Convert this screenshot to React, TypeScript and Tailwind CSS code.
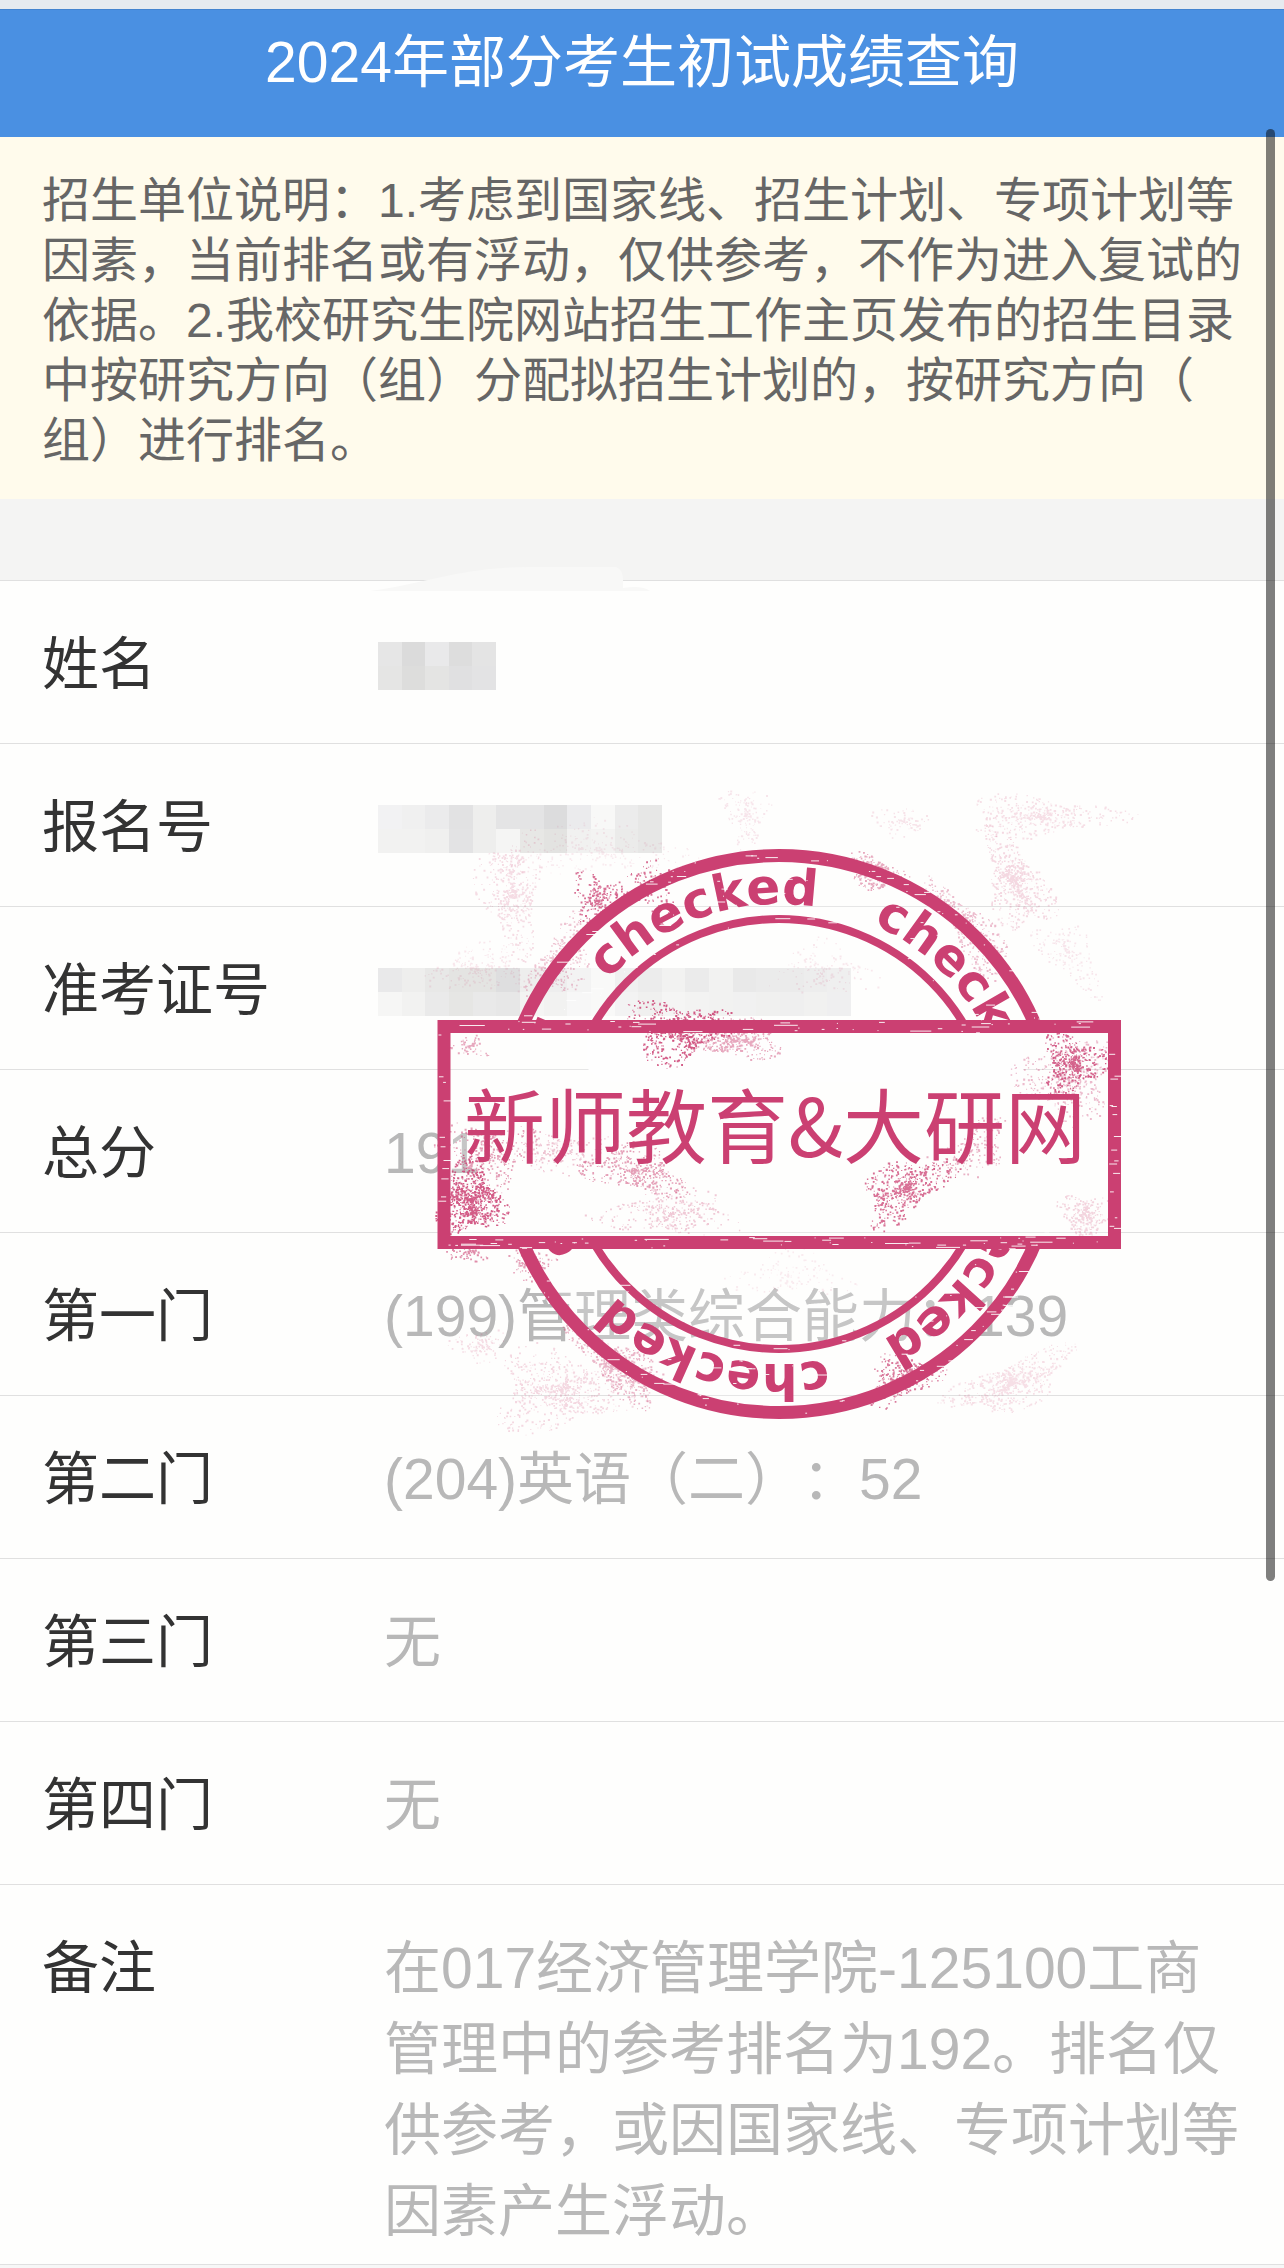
import React from 'react';

interface ScoreRow {
    label: string;
    value?: string;
    mosaic?: string[][];
}

interface Cluster {
    x: number;
    y: number;
    rx: number;
    ry: number;
    angle?: number;
    count: number;
    opacity: number;
}

const PINK = '#cb4072';

const rows: ScoreRow[] = [
    {
        label: '姓名',
        mosaic: [
            ['#e6e6e6', '#dbdbdb', '#e9e9ea', '#dddddd', '#e4e4e4'],
            ['#e5e5e4', '#dddddc', '#e4e4e3', '#e0e0e1', '#e3e3e4']
        ]
    },
    {
        label: '报名号',
        mosaic: [
            ['#f2f2f3', '#f0f0f0', '#ebebec', '#e2e2e3', '#eeeeed', '#e4e4e5', '#e4e4e5', '#dcdcdd', '#ebebed', '#f8f8f7', '#ececec', '#e7e7e6'],
            ['#f2f2f1', '#f2f2f1', '#f0f0ef', '#e3e3e4', '#eeeeed', '#f5f5f4', '#e7e7e5', '#e3e3e1', '#f1f1f0', '#f3f3f2', '#ebebea', '#e7e7e6']
        ]
    },
    {
        label: '准考证号',
        mosaic: [
            ['#e9e9ea', '#eeeeed', '#e8e8e7', '#e4e4e2', '#e4e4e2', '#dededf', '#eeeeed', '#eaeaea', '#f1f1f1', '#f8f8f7', '#ededed', '#e8e8e8', '#efefee', '#e6e6e6', '#efefee', '#e4e4e4', '#e7e7e7', '#e7e7e6', '#e9e9e9', '#ebebeb'],
            ['#f6f6f5', '#f2f2f1', '#eaeaea', '#e6e6e4', '#e9e9e9', '#e7e7e7', '#f3f3f2', '#efefee', '#f5f5f5', '#f8f8f7', '#f1f1f0', '#ededec', '#f3f3f2', '#f0f0ef', '#efefee', '#eeeeee', '#ededec', '#ececec', '#eeeeed', '#ececed']
        ]
    },
    { label: '总分', value: '191' },
    { label: '第一门', value: '(199)管理类综合能力：139' },
    { label: '第二门', value: '(204)英语（二）：52' },
    { label: '第三门', value: '无' },
    { label: '第四门', value: '无' }
];

const clusters: Cluster[] = [
    { x: 470, y: 1200, rx: 42, ry: 46, count: 800, opacity: 0.85 },
    { x: 485, y: 1155, rx: 62, ry: 50, count: 320, opacity: 0.5 },
    { x: 468, y: 1045, rx: 26, ry: 18, count: 60, opacity: 0.45 },
    { x: 676, y: 1030, rx: 66, ry: 40, count: 560, opacity: 0.85 },
    { x: 735, y: 1040, rx: 64, ry: 24, count: 420, opacity: 0.45 },
    { x: 1072, y: 1062, rx: 40, ry: 38, count: 430, opacity: 0.8 },
    { x: 1068, y: 1080, rx: 60, ry: 55, count: 420, opacity: 0.35 },
    { x: 905, y: 1188, rx: 64, ry: 34, angle: -30, count: 540, opacity: 0.75 },
    { x: 970, y: 1150, rx: 56, ry: 30, angle: -30, count: 190, opacity: 0.4 },
    { x: 635, y: 1170, rx: 68, ry: 30, angle: 12, count: 400, opacity: 0.5 },
    { x: 560, y: 1150, rx: 66, ry: 28, count: 180, opacity: 0.3 },
    { x: 670, y: 1212, rx: 90, ry: 32, count: 320, opacity: 0.28 },
    { x: 596, y: 900, rx: 32, ry: 36, count: 240, opacity: 0.75 },
    { x: 646, y: 886, rx: 40, ry: 34, count: 120, opacity: 0.75 },
    { x: 560, y: 960, rx: 30, ry: 58, angle: 30, count: 360, opacity: 0.3 },
    { x: 512, y: 890, rx: 40, ry: 76, count: 520, opacity: 0.18 },
    { x: 600, y: 850, rx: 110, ry: 34, count: 240, opacity: 0.1 },
    { x: 745, y: 815, rx: 30, ry: 38, count: 150, opacity: 0.13 },
    { x: 480, y: 970, rx: 66, ry: 30, count: 220, opacity: 0.12 },
    { x: 876, y: 872, rx: 38, ry: 20, angle: 20, count: 340, opacity: 0.45 },
    { x: 970, y: 930, rx: 76, ry: 24, angle: 52, count: 420, opacity: 0.35 },
    { x: 1040, y: 816, rx: 100, ry: 26, count: 420, opacity: 0.16 },
    { x: 1015, y: 880, rx: 72, ry: 36, angle: 65, count: 620, opacity: 0.2 },
    { x: 1070, y: 955, rx: 56, ry: 28, angle: 50, count: 160, opacity: 0.13 },
    { x: 900, y: 820, rx: 42, ry: 22, count: 90, opacity: 0.14 },
    { x: 820, y: 970, rx: 66, ry: 34, count: 140, opacity: 0.12 },
    { x: 1085, y: 1215, rx: 34, ry: 30, count: 260, opacity: 0.22 },
    { x: 468, y: 1252, rx: 26, ry: 14, count: 60, opacity: 0.6 },
    { x: 530, y: 1262, rx: 30, ry: 22, count: 120, opacity: 0.5 },
    { x: 618, y: 1366, rx: 72, ry: 28, angle: 38, count: 620, opacity: 0.38 },
    { x: 560, y: 1390, rx: 90, ry: 52, count: 700, opacity: 0.2 },
    { x: 480, y: 1345, rx: 34, ry: 22, count: 100, opacity: 0.18 },
    { x: 902, y: 1378, rx: 50, ry: 30, angle: -20, count: 320, opacity: 0.7 },
    { x: 1012, y: 1382, rx: 84, ry: 30, angle: -22, count: 640, opacity: 0.16 },
    { x: 790, y: 1275, rx: 76, ry: 28, count: 130, opacity: 0.1 }
];

// Seeded so the grain looks the same on every render
const createRandom = (seed: number) => {
    let state = seed;
    return () => {
        state = (state * 1664525 + 1013904223) % 4294967296;
        return state / 4294967296;
    };
};

const specklePath = (cluster: Cluster, seed: number) => {
    const random = createRandom(seed);
    const turn = ((cluster.angle ?? 0) * Math.PI) / 180;
    let d = '';
    for (let i = 0; i < cluster.count; i++) {
        const theta = random() * Math.PI * 2;
        const radius = Math.pow(random(), 0.8) * (0.75 + 0.25 * Math.sin(theta * 3 + seed));
        const dx = Math.cos(theta) * radius * cluster.rx;
        const dy = Math.sin(theta) * radius * cluster.ry;
        const x = cluster.x + dx * Math.cos(turn) - dy * Math.sin(turn);
        const y = cluster.y + dx * Math.sin(turn) + dy * Math.cos(turn);
        const size = 0.8 + random() * 1.3;
        d += `M${x.toFixed(1)} ${y.toFixed(1)}h${size.toFixed(1)}v${size.toFixed(1)}h-${size.toFixed(1)}z`;
    }
    return d;
};

const scratch = (x: number, y: number, length: number) => `M${x.toFixed(1)} ${y.toFixed(1)}h${length.toFixed(1)}`;

const scratchPath = () => {
    const random = createRandom(77);
    let d = '';
    for (let i = 0; i < 90; i++) {
        const edge = random() < 0.5 ? 1021 : 1237;
        d += scratch(445 + random() * 660, edge + random() * 11, 1 + Math.pow(random(), 4) * 26);
    }
    for (let i = 0; i < 26; i++) {
        const edge = random() < 0.5 ? 438 : 1109;
        d += scratch(edge + random() * 6, 1035 + random() * 200, 2 + random() * 6);
    }
    for (let i = 0; i < 240; i++) {
        const theta = random() * Math.PI * 2;
        const radius = random() < 0.4 ? 273 + random() * 11 : 212 + random() * 52;
        d += scratch(779 + Math.cos(theta) * radius, 1134 + Math.sin(theta) * radius, 1 + Math.pow(random(), 3) * 14);
    }
    return d;
};

const Mosaic: React.FC<{ cells: string[][] }> = ({ cells }) => {
    const columns = cells[0].length;
    return (
        <svg
            className="block -ml-1.5 mt-1 h-12"
            style={{ width: Math.round(columns * 23.65) }}
            viewBox={`0 0 ${columns} 2`}
            preserveAspectRatio="none"
            shapeRendering="crispEdges"
            aria-hidden="true"
        >
            {cells.map((line, y) =>
                line.map((color, x) => <rect key={`${x}-${y}`} x={x} y={y} width="1" height="1" fill={color} />)
            )}
        </svg>
    );
};

const Stamp: React.FC = () => (
    <svg
        className="absolute left-[280px] top-[560px] w-[900px] h-[900px] pointer-events-none"
        viewBox="280 560 900 900"
    >
        <defs>
            <clipPath id="outside-box">
                <path d="M280 560h900v460h-900zM280 1249h900v211h-900z" />
            </clipPath>
            <path id="ring-text" d="M779 904a230 230 0 0 1 0 460a230 230 0 0 1 0-460" />
        </defs>

        {/* Eraser smudges */}
        <path d="M370 591C425 584 460 567 530 567H616Q622 569 623 578V588Q642 585 650 591z" fill="#f8f8f7" />
        <path d="M587 1040H1023V1082H620Q600 1082 587 1068z" fill="#fefefe" />

        {/* Veil under the stamp */}
        <circle cx="779" cy="1134" r="278" fill="#fff" opacity="0.2" clipPath="url(#outside-box)" />
        <rect x="444" y="1027" width="670" height="215" fill="#fff" opacity="0.2" />

        {clusters.map((cluster, i) => (
            <path key={i} d={specklePath(cluster, i * 97 + 13)} fill={PINK} opacity={cluster.opacity} />
        ))}

        {/* Rings and curved text */}
        <g clipPath="url(#outside-box)">
            <circle cx="779" cy="1134" r="278.5" fill="none" stroke={PINK} strokeWidth="13" />
            <circle cx="779" cy="1134" r="215" fill="none" stroke={PINK} strokeWidth="8" />
            {[-48, 24, 96, 168, 240].map((angle) => (
                <text
                    key={angle}
                    transform={`rotate(${angle} 779 1134)`}
                    fill={PINK}
                    fontSize="50"
                    fontWeight="700"
                    fontFamily='"DejaVu Sans", sans-serif'
                >
                    <textPath href="#ring-text">checked</textPath>
                </text>
            ))}
        </g>

        <rect x="444" y="1026.5" width="670.5" height="216" fill="none" stroke={PINK} strokeWidth="13" />
        <path d={scratchPath()} stroke="#fff" strokeWidth="1" opacity="0.9" />
        <text
            x="775"
            y="1157"
            textAnchor="middle"
            fill={PINK}
            fontSize="81"
            fontFamily='"Noto Sans CJK SC", sans-serif'
        >
            新师教育&amp;大研网
        </text>
    </svg>
);

const App: React.FC = () => {
    return (
        <main
            lang="zh-CN"
            className="relative min-h-screen bg-[#f7f7f7] font-['Liberation_Sans','Noto_Sans_CJK_SC',sans-serif] [text-spacing-trim:space-all]"
        >
            <div className="h-[9px] bg-[#e6eaef]" />
            <header className="h-32 pt-4 border-t border-[#4383cf] bg-[#4a90e2] text-center text-white">
                <h1 className="text-[57px] leading-[72px]">2024年部分考生初试成绩查询</h1>
            </header>

            <p className="px-[42px] pt-[34px] pb-7 bg-[#fffbec] text-[#666] text-5xl leading-[60px] [line-break:anywhere]">
                招生单位说明：1.考虑到国家线、招生计划、专项计划等因素，当前排名或有浮动，仅供参考，不作为进入复试的依据。2.我校研究生院网站招生工作主页发布的招生目录中按研究方向（组）分配拟招生计划的，按研究方向（
                <br />
                组）进行排名。
            </p>
            <div className="h-[81px] bg-[#f4f4f3]" />

            <table className="w-full table-fixed border-collapse border-b border-[#e0e0e0] bg-[#fefefd] text-[57px] leading-[81px]">
                <tbody>
                    {rows.map((row) => (
                        <tr key={row.label} className="h-[163px] border-t border-[#e0e0e0]">
                            <th scope="row" className="w-[384px] pl-[42px] pt-1 text-left font-normal text-[#333]">
                                {row.label}
                            </th>
                            <td className="pr-10 pt-1 text-[#b8b8b8]">
                                {row.mosaic ? <Mosaic cells={row.mosaic} /> : row.value}
                            </td>
                        </tr>
                    ))}
                    <tr className="border-t border-[#e0e0e0] align-top">
                        <th scope="row" className="pl-[42px] pt-[43px] text-left font-normal text-[#333]">
                            备注
                        </th>
                        <td className="pr-10 pt-[43px] pb-3 text-[#b8b8b8]">
                            在017经济管理学院-125100工商管理中的参考排名为192。排名仅供参考，或因国家线、专项计划等因素产生浮动。
                        </td>
                    </tr>
                </tbody>
            </table>

            <Stamp />

            {/* Scroll indicator */}
            <div className="absolute right-[9px] top-[129px] h-[1452px] w-[9px] rounded-full bg-black/50" />
        </main>
    );
};

export default App;
